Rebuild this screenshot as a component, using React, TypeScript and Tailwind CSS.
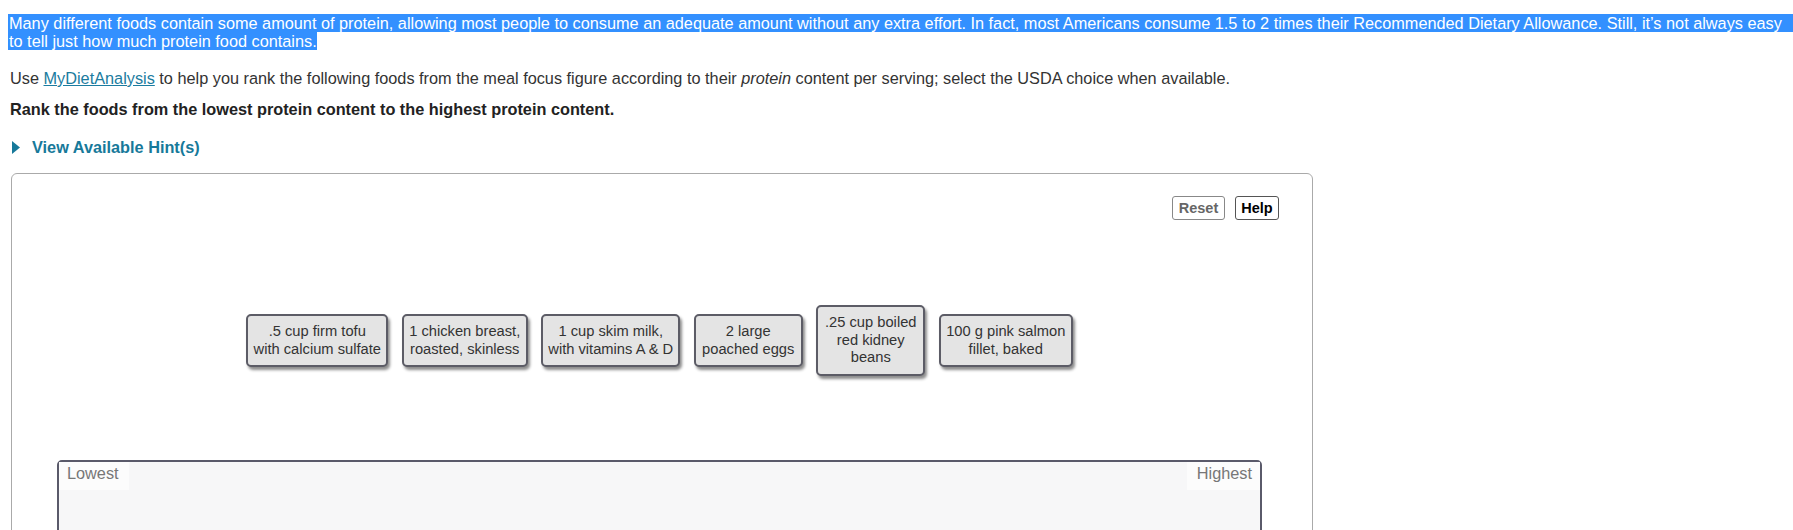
import React from 'react';

const foods = [
  { lines: ['.5 cup firm tofu', 'with calcium sulfate'], width: 'w-[142px]' },
  { lines: ['1 chicken breast,', 'roasted, skinless'], width: 'w-[126px]' },
  { lines: ['1 cup skim milk,', 'with vitamins A & D'], width: 'w-[139px]' },
  { lines: ['2 large', 'poached eggs'], width: 'w-[109px]' },
  { lines: ['.25 cup boiled', 'red kidney', 'beans'], width: 'w-[109px]' },
  { lines: ['100 g pink salmon', 'fillet, baked'], width: 'w-[134px]' },
];

const FoodCard: React.FC<{ lines: string[]; width: string }> = ({ lines, width }) => (
  <div
    className={`${width} rounded-[5px] border-2 border-[#5c5c66] bg-[#e4e4e4] py-[7px] text-center text-[14.7px] leading-[17.5px] whitespace-nowrap text-[#333] shadow-[2px_3px_3px_rgba(0,0,0,0.45)]`}
  >
    {lines.map((l, i) => (
      <div key={i}>{l}</div>
    ))}
  </div>
);

export default function App() {
  return (
    <div className="min-h-[530px] bg-white px-[8px] pt-[14px] font-['Liberation_Sans',Arial,sans-serif] text-[16.3px] leading-[18px] text-[#333]">
      {/* selected intro text */}
      <p className="-mr-[8px] whitespace-nowrap">
        <span className="block bg-[#3390ff] pl-px text-white">
          Many different foods contain some amount of protein, allowing most people to consume an adequate amount
          without any extra effort. In fact, most Americans consume 1.5 to 2 times their Recommended Dietary
          Allowance. Still, it’s not always easy
        </span>
        <span className="bg-[#3390ff] pl-px text-white">to tell just how much protein food contains. </span>
      </p>

      <p className="mt-[19px] pl-[2px]">
        Use{' '}
        <a href="#" className="text-[#1b7ca0] underline">
          MyDietAnalysis
        </a>{' '}
        to help you rank the following foods from the meal focus figure according to their <em>protein</em> content
        per serving; select the USDA choice when available.
      </p>

      <p className="mt-[13px] pl-[2px] font-bold text-[#222]">
        Rank the foods from the lowest protein content to the highest protein content.
      </p>

      <div className="mt-[20px] flex items-center gap-[12px] pl-[4px] font-bold text-[#17799a]">
        <svg width="8" height="13" viewBox="0 0 8 13" className="fill-[#17799a]">
          <path d="M0 0 L8 6.5 L0 13 Z" />
        </svg>
        <span>View Available Hint(s)</span>
      </div>

      <div className="mt-[17px] ml-[3px] w-[1302px] rounded-[6px] border border-[#aaa] pb-[20px]">
        <div className="flex justify-end gap-[10px] pt-[22px] pr-[33px]">
          <button className="h-[24px] w-[53px] rounded-[3px] border border-[#888] bg-white text-[14.5px] font-bold text-[#666]">
            Reset
          </button>
          <button className="h-[24px] w-[44px] rounded-[3px] border border-[#555] bg-white text-[14.5px] font-bold text-black">
            Help
          </button>
        </div>

        <div className="mt-[86px] flex h-[69px] items-center justify-center gap-[13.5px] pr-[5px]">
          {foods.map((f, i) => (
            <FoodCard key={i} lines={f.lines} width={f.width} />
          ))}
        </div>

        <div className="mt-[85px] mr-[50px] ml-[45px] h-[120px] rounded-[5px] border-2 border-[#5a5a6a] bg-[#f7f7f8]">
          <div className="flex justify-between">
            <span className="bg-[#fcfcfc] pt-[2px] pr-[10px] pb-[8px] pl-[8px] text-[#777]">Lowest</span>
            <span className="bg-[#fcfcfc] pt-[2px] pr-[8px] pb-[8px] pl-[10px] text-[#777]">Highest</span>
          </div>
        </div>
      </div>
    </div>
  );
}
